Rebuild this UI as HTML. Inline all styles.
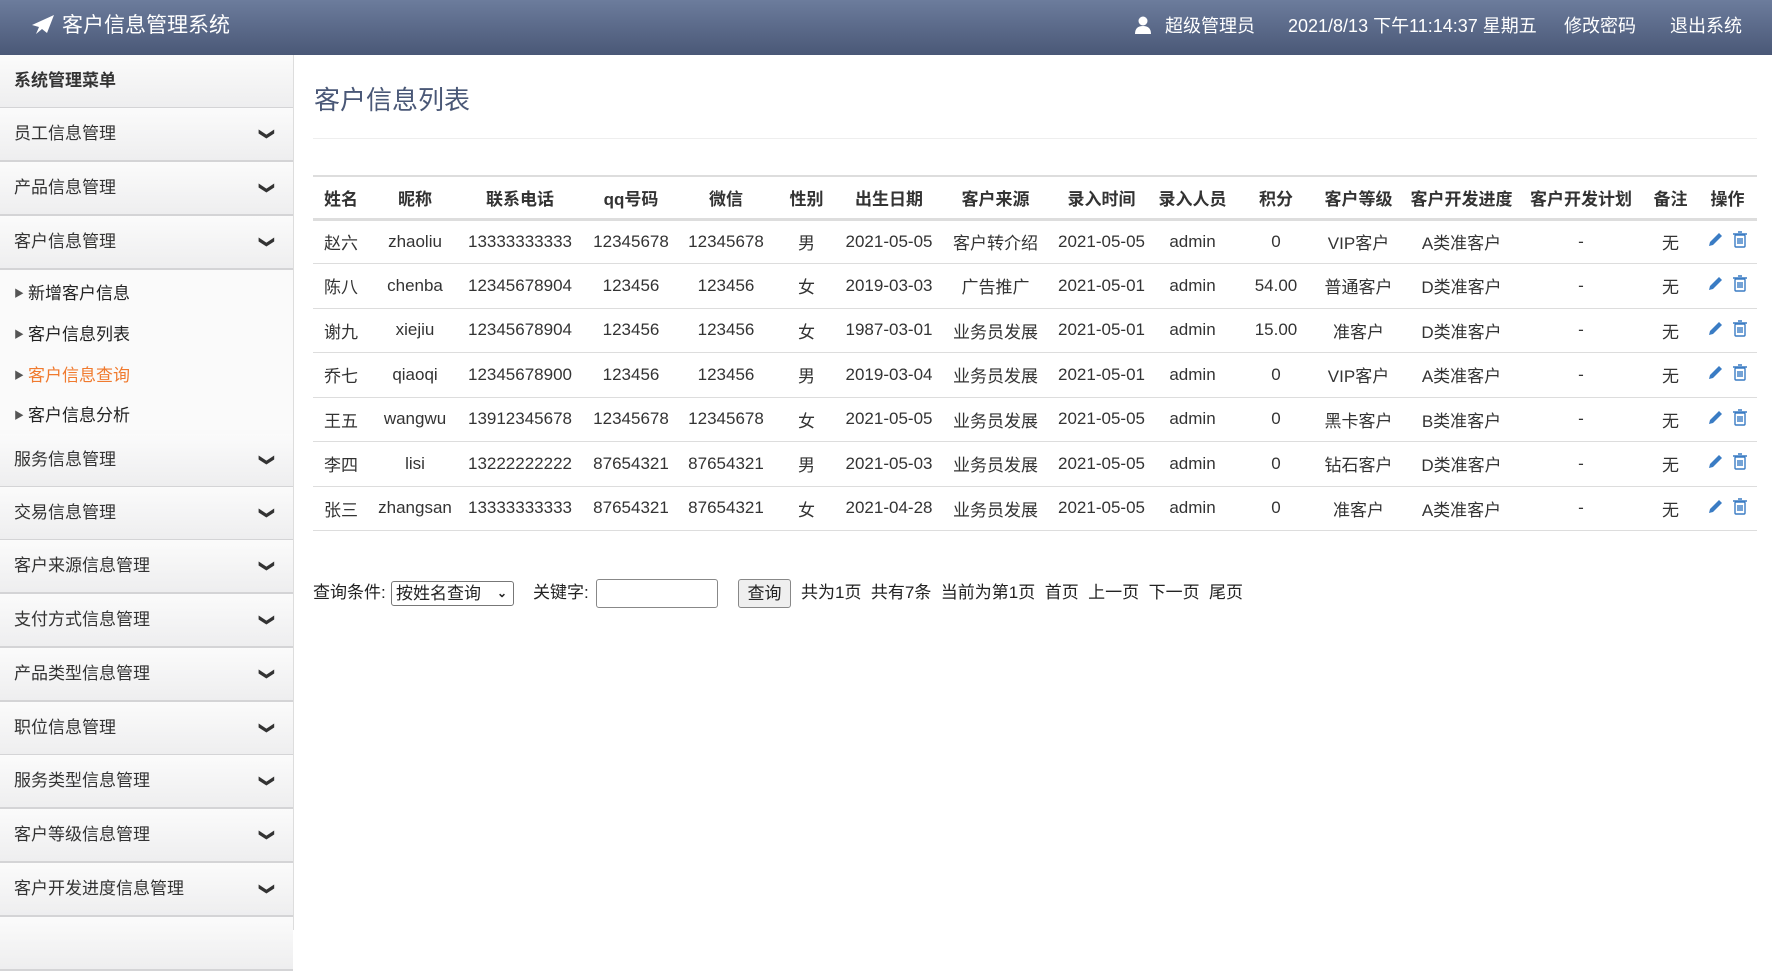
<!DOCTYPE html>
<html><head><meta charset="utf-8"><style>
*{margin:0;padding:0;box-sizing:border-box}
body{width:1772px;height:930px;overflow:hidden;background:#fff;font-family:"Liberation Sans","Noto Sans CJK SC",sans-serif;color:#333;position:relative}
.hd{position:absolute;left:0;top:0;width:1772px;height:55px;background:linear-gradient(#6c7c9c,#4a5877);color:#fff}
.hd span{position:absolute;top:0;line-height:52px;font-size:18px}
.sb{position:absolute;left:0;top:55px;width:294px;height:875px;background:#fafafa;border-right:1px solid #ddd}
.it{position:absolute;left:0;width:293px;height:54px;background:linear-gradient(#fbfbfb,#eeeeef);border-bottom:2px solid #d4d4d6;font-size:17px;line-height:52px;padding-left:14px;color:#333}
.it b{position:absolute;right:20px;top:0;font-size:15px;transform:rotate(90deg);display:inline-block;line-height:52px}
.sub{position:absolute;left:14px;font-size:17px;color:#222}
.sub i{font-style:normal;font-size:10px;color:#555;margin-right:4px;vertical-align:2px}
.ttl{position:absolute;left:314px;top:80px;font-size:26px;color:#4a5877}
table{position:absolute;left:313px;top:175px;width:1444px;border-collapse:collapse;font-size:17px;table-layout:fixed}
th{height:43px;border-top:2px solid #ddd;border-bottom:3px solid #ddd;font-weight:bold;color:#333;text-align:center;white-space:nowrap}
td{height:44.5px;border-bottom:1px solid #ddd;text-align:center;color:#333;white-space:nowrap;padding:0}
.q{position:absolute;top:580px;font-size:17px;color:#222;line-height:26px}
</style></head><body>
<div class="hd">
<svg style="position:absolute;left:31px;top:14px" width="24" height="22" viewBox="0 0 24 22"><path d="M23 1 L1 11 L8 13 L5 20 L11 15 L16 19 Z" fill="#fff"/></svg>
<span style="left:62px;font-size:21px">客户信息管理系统</span>
<svg style="position:absolute;left:1134px;top:16px" width="18" height="18" viewBox="0 0 18 18"><circle cx="9" cy="5" r="4.5" fill="#fff"/><path d="M1 18 Q1 10 9 10 Q17 10 17 18 Z" fill="#fff"/></svg>
<span style="left:1165px">超级管理员</span>
<span style="left:1288px">2021/8/13 下午11:14:37 星期五</span>
<span style="left:1564px">修改密码</span>
<span style="left:1670px">退出系统</span>
</div>
<div class="sb">
<div class="it" style="top:0;font-weight:bold">系统管理菜单</div>
<div class="it" style="top:53px">员工信息管理<b>&#10095;</b></div>
<div class="it" style="top:107px">产品信息管理<b>&#10095;</b></div>
<div class="it" style="top:161px">客户信息管理<b>&#10095;</b></div>
<div class="sub" style="top:224px"><i>▶</i>新增客户信息</div>
<div class="sub" style="top:265px"><i>▶</i>客户信息列表</div>
<div class="sub" style="top:306px;color:#f07a2e"><i>▶</i>客户信息查询</div>
<div class="sub" style="top:346px"><i>▶</i>客户信息分析</div>
<div class="it" style="top:379px">服务信息管理<b>&#10095;</b></div>
<div class="it" style="top:432px">交易信息管理<b>&#10095;</b></div>
<div class="it" style="top:485px">客户来源信息管理<b>&#10095;</b></div>
<div class="it" style="top:539px">支付方式信息管理<b>&#10095;</b></div>
<div class="it" style="top:593px">产品类型信息管理<b>&#10095;</b></div>
<div class="it" style="top:647px">职位信息管理<b>&#10095;</b></div>
<div class="it" style="top:700px">服务类型信息管理<b>&#10095;</b></div>
<div class="it" style="top:754px">客户等级信息管理<b>&#10095;</b></div>
<div class="it" style="top:808px">客户开发进度信息管理<b>&#10095;</b></div>
<div class="it" style="top:862px"></div>
</div>
<div class="ttl">客户信息列表</div>
<div style="position:absolute;left:313px;top:138px;width:1444px;border-top:1px solid #eee"></div>
<table>
<colgroup><col style="width:56px"><col style="width:92px"><col style="width:118px"><col style="width:104px"><col style="width:86px"><col style="width:75px"><col style="width:90px"><col style="width:123px"><col style="width:89px"><col style="width:93px"><col style="width:74px"><col style="width:91px"><col style="width:115px"><col style="width:124px"><col style="width:55px"><col style="width:59px"></colgroup>
<tr><th>姓名</th><th>昵称</th><th>联系电话</th><th>qq号码</th><th>微信</th><th>性别</th><th>出生日期</th><th>客户来源</th><th>录入时间</th><th>录入人员</th><th>积分</th><th>客户等级</th><th>客户开发进度</th><th>客户开发计划</th><th>备注</th><th>操作</th></tr>
<tr><td>赵六</td><td>zhaoliu</td><td>13333333333</td><td>12345678</td><td>12345678</td><td>男</td><td>2021-05-05</td><td>客户转介绍</td><td>2021-05-05</td><td>admin</td><td>0</td><td>VIP客户</td><td>A类准客户</td><td>-</td><td>无</td><td class="op"></td></tr>
<tr><td>陈八</td><td>chenba</td><td>12345678904</td><td>123456</td><td>123456</td><td>女</td><td>2019-03-03</td><td>广告推广</td><td>2021-05-01</td><td>admin</td><td>54.00</td><td>普通客户</td><td>D类准客户</td><td>-</td><td>无</td><td class="op"></td></tr>
<tr><td>谢九</td><td>xiejiu</td><td>12345678904</td><td>123456</td><td>123456</td><td>女</td><td>1987-03-01</td><td>业务员发展</td><td>2021-05-01</td><td>admin</td><td>15.00</td><td>准客户</td><td>D类准客户</td><td>-</td><td>无</td><td class="op"></td></tr>
<tr><td>乔七</td><td>qiaoqi</td><td>12345678900</td><td>123456</td><td>123456</td><td>男</td><td>2019-03-04</td><td>业务员发展</td><td>2021-05-01</td><td>admin</td><td>0</td><td>VIP客户</td><td>A类准客户</td><td>-</td><td>无</td><td class="op"></td></tr>
<tr><td>王五</td><td>wangwu</td><td>13912345678</td><td>12345678</td><td>12345678</td><td>女</td><td>2021-05-05</td><td>业务员发展</td><td>2021-05-05</td><td>admin</td><td>0</td><td>黑卡客户</td><td>B类准客户</td><td>-</td><td>无</td><td class="op"></td></tr>
<tr><td>李四</td><td>lisi</td><td>13222222222</td><td>87654321</td><td>87654321</td><td>男</td><td>2021-05-03</td><td>业务员发展</td><td>2021-05-05</td><td>admin</td><td>0</td><td>钻石客户</td><td>D类准客户</td><td>-</td><td>无</td><td class="op"></td></tr>
<tr><td>张三</td><td>zhangsan</td><td>13333333333</td><td>87654321</td><td>87654321</td><td>女</td><td>2021-04-28</td><td>业务员发展</td><td>2021-05-05</td><td>admin</td><td>0</td><td>准客户</td><td>A类准客户</td><td>-</td><td>无</td><td class="op"></td></tr>
</table>
<script>
document.querySelectorAll('.op').forEach(function(c){c.innerHTML='<svg width="44" height="18" viewBox="0 0 44 18"><path d="M3 16 L4 12 L13 3 L16 6 L7 15 Z" fill="#3a7cc4"/><g fill="none" stroke="#3a7cc4" stroke-width="1.4"><rect x="29" y="5" width="10" height="12" rx="1"/><path d="M27 4 H41 M32 2 H36 M32 8 V14 M34 8 V14 M36 8 V14"/></g></svg>';});
</script>
<div class="q" style="left:313px">查询条件:</div>
<div class="q" style="left:391px;top:581px;width:123px;height:25px;border:1px solid #777;border-radius:3px;line-height:23px;padding-left:4px">按姓名查询 <span style="position:absolute;right:6px;font-size:12px;font-weight:bold">&#8964;</span></div>
<div class="q" style="left:533px">关键字:</div>
<div style="position:absolute;left:596px;top:579px;width:122px;height:29px;border:1px solid #888;border-radius:3px"></div>
<div class="q" style="left:738px;top:579px;width:53px;height:29px;border:1px solid #888;border-radius:3px;background:#efefef;text-align:center;line-height:27px">查询</div>
<div class="q" style="left:801px">共为1页&nbsp; 共有7条&nbsp; 当前为第1页&nbsp; 首页&nbsp; 上一页&nbsp; 下一页&nbsp; 尾页</div>
</body></html>
